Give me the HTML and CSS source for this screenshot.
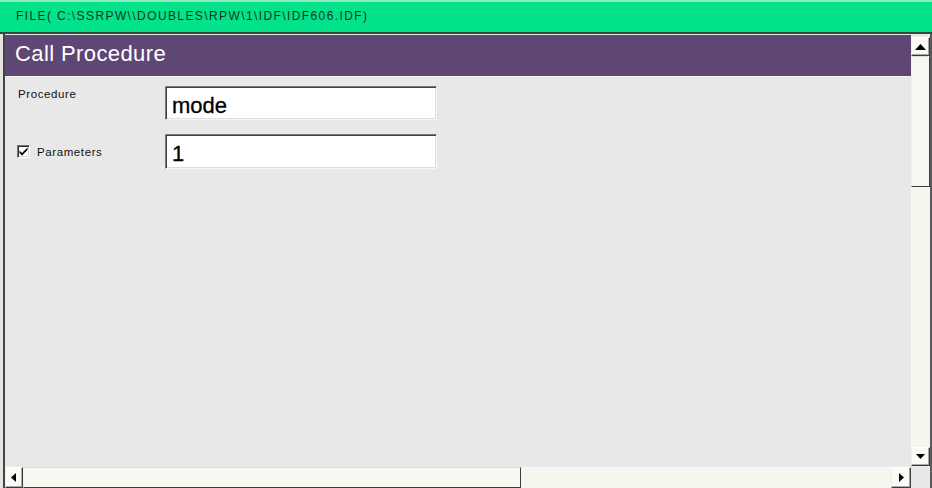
FILE: index.html
```html
<!DOCTYPE html>
<html>
<head>
<meta charset="utf-8">
<link rel="stylesheet" href="styles.css">
</head>
<body>
<div class="titlebar"><span class="path">FILE( C:\SSRPW\\DOUBLES\RPW\1\IDF\IDF606.IDF)</span></div>
<div class="main">
  <div class="leftgap"></div>
  <div class="leftline"></div>
  <div class="panel">
    <div class="header">Call Procedure</div>
    <div class="content">
      <div class="row row1">
        <div class="label">Procedure</div>
        <div class="field"><span class="val">mode</span></div>
      </div>
      <div class="row row2">
        <div class="label check">
          <span class="box"><svg width="9" height="9" viewBox="0 0 9 9"><path d="M0.5 3.5 L3 6 L8.5 0.5 L8.5 3 L3 8.5 L0.5 6 Z" fill="#000"/></svg></span>
          <span>Parameters</span>
        </div>
        <div class="field"><span class="val">1</span></div>
      </div>
    </div>
    <div class="hscroll">
      <div class="btn hbtn"><svg width="6" height="9" viewBox="0 0 6 9"><path d="M5 0 L0 4.5 L5 9 Z" fill="#000"/></svg></div>
      <div class="hthumb"></div>
      <div class="htrack"></div>
      <div class="btn hbtn"><svg width="6" height="9" viewBox="0 0 6 9"><path d="M1 0 L6 4.5 L1 9 Z" fill="#000"/></svg></div>
    </div>
  </div>
  <div class="vscroll">
    <div class="btn vbtn"><svg width="11" height="6" viewBox="0 0 11 6"><path d="M0 6 L5.5 0 L11 6 Z" fill="#000"/></svg></div>
    <div class="vthumb"></div>
    <div class="vtrack"></div>
    <div class="btn vbtn"><svg width="9" height="5" viewBox="0 0 9 5"><path d="M0 0 L9 0 L4.5 5 Z" fill="#000"/></svg></div>
    <div class="corner"></div>
  </div>
  <div class="rightline"></div>
</div>
</body>
</html>
```
FILE: styles.css
```css
* { box-sizing: border-box; }
html, body { margin: 0; padding: 0; }
body {
  width: 932px;
  height: 488px;
  overflow: hidden;
  background: #e8e8e8;
  font-family: "Liberation Sans", Arial, sans-serif;
  display: flex;
  flex-direction: column;
}
.titlebar {
  height: 34px;
  flex: none;
  background: #02e28a;
  border-top: 2px solid #8cecc0;
  border-bottom: 2px solid #2d4a3d;
  padding-left: 16px;
  display: flex;
  align-items: center;
}
.path {
  font-size: 12px;
  letter-spacing: 1.4px;
  color: #11381f;
  padding-bottom: 2px;
}
.main {
  flex: 1;
  display: flex;
  min-height: 0;
}
.leftgap { width: 3px; background: #e4e4e4; }
.leftline { width: 2px; background: #444; }
.panel {
  width: 906px;
  display: flex;
  flex-direction: column;
}
.header {
  margin-top: 1px;
  height: 42px;
  flex: none;
  background: #5f4775;
  color: #fff;
  font-size: 22px;
  letter-spacing: 0.4px;
  padding-left: 10px;
  padding-top: 6px;
  border-bottom: 1px solid #f3f3f3;
}
.content {
  flex: 1;
  background: #e8e8e8;
  padding-top: 9px;
}
.row {
  display: flex;
  align-items: flex-start;
}
.label {
  width: 160px;
  padding-left: 13px;
  font-size: 11.5px;
  letter-spacing: 0.6px;
  color: #111;
}
.row1 .label { padding-top: 2px; }
.row2 { margin-top: 14px; }
.row2 .label { padding-top: 11px; padding-left: 12px; }
.check { display: flex; align-items: center; gap: 7px; }
.box {
  width: 13px;
  height: 13px;
  background: #fff;
  border: 1px solid;
  border-color: #6e6e6e #fff #fff #6e6e6e;
  box-shadow: inset 1px 1px #333, inset -1px -1px #d8d8d8;
  display: flex;
  align-items: center;
  justify-content: center;
}
.field {
  width: 272px;
  height: 34px;
  background: #fff;
  border: 1px solid;
  border-color: #7c7c7c #f6f6f6 #f6f6f6 #7c7c7c;
  box-shadow: inset 1px 1px #3d3d3d, inset -1px -1px #dedede;
  padding-left: 6px;
  display: flex;
  align-items: center;
}
.row2 .field { height: 35px; }
.val {
  font-size: 22px;
  color: #000;
  padding-top: 5px;
  -webkit-text-stroke: 0.3px #000;
}
.btn {
  background: #fbfaf4;
  border: 1px solid;
  border-color: #fff #3c3c3c #3c3c3c #f0f0f0;
  box-shadow: inset -1px -1px #a8a8a8;
  display: flex;
  align-items: center;
  justify-content: center;
  flex: none;
}
.hscroll {
  height: 21px;
  flex: none;
  display: flex;
  background: #e8e8e8;
}
.hbtn { width: 18px; }
.hbtn:last-child { width: 20px; }
.hthumb {
  width: 498px;
  background: #f8f7f1;
  border: 1px solid;
  border-color: #dcdcd4 #3c3c3c #3c3c3c #f0f0f0;
}
.htrack {
  flex: 1;
  background: #f6f6ef;
}
.vscroll {
  width: 19px;
  display: flex;
  flex-direction: column;
  padding-top: 3px;
}
.vbtn { height: 19px; }
.vthumb {
  height: 131px;
  flex: none;
  background: #f8f7f1;
  border: 1px solid;
  border-color: #dcdcd4 #3c3c3c #3c3c3c #f0f0f0;
}
.vtrack { flex: 1; background: #f6f6ef; }
.corner { height: 22px; flex: none; background: #e8e8e8; }
.rightline { width: 2px; background: #5a5a5a; }
```
